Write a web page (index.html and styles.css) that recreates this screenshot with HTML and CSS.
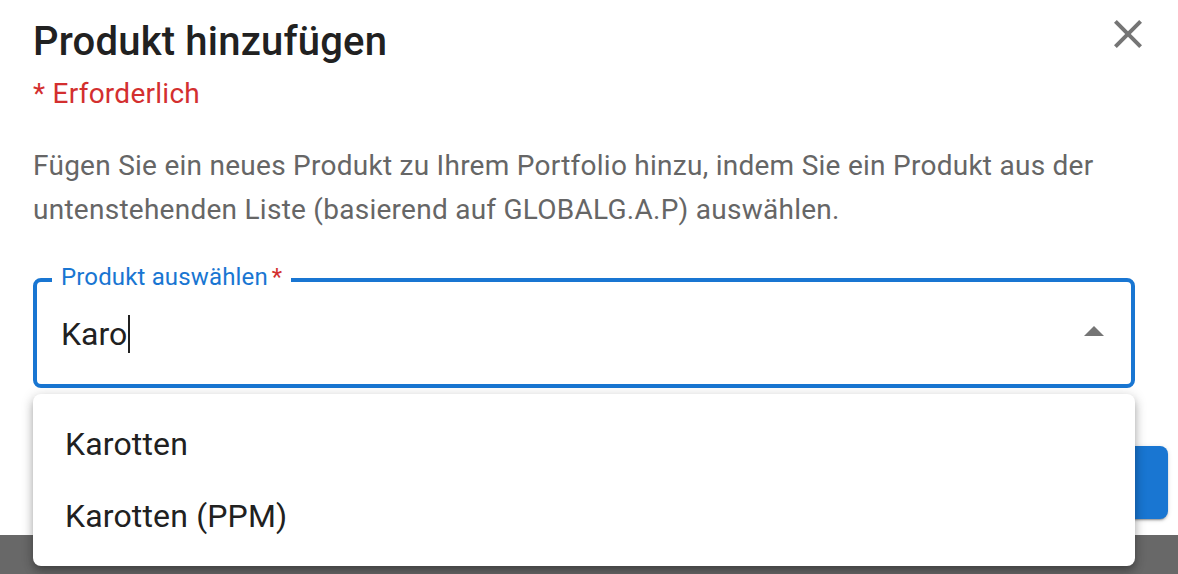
FILE: index.html
```html
<!DOCTYPE html>
<html lang="de">
<head>
<meta charset="utf-8">
<title>Produkt hinzufügen</title>
<link rel="stylesheet" href="styles.css">
</head>
<body>
<div class="dialog">
  <div class="head">
    <h2 class="title">Produkt hinzufügen</h2>
    <button class="close" aria-label="Schließen">
      <svg viewBox="0 0 24 24" width="48" height="48"><path d="M19 6.41 17.59 5 12 10.59 6.41 5 5 6.41 10.59 12 5 17.59 6.41 19 12 13.41 17.59 19 19 17.59 13.41 12z" fill="#757575"/></svg>
    </button>
  </div>
  <div class="req">* Erforderlich</div>
  <p class="desc">Fügen Sie ein neues Produkt zu Ihrem Portfolio hinzu, indem Sie ein Produkt aus der untenstehenden Liste (basierend auf GLOBALG.A.P) auswählen.</p>
  <div class="field">
    <div class="outline">
      <span class="value">Karo</span><span class="caret"></span>
      <svg class="arrow" viewBox="0 0 24 24" width="48" height="48"><path d="M7 14l5-5 5 5z" fill="#757575"/></svg>
    </div>
    <label class="label">Produkt auswählen<span class="star">*</span></label>
    <ul class="listbox">
      <li class="option">Karotten</li>
      <li class="option">Karotten (PPM)</li>
    </ul>
  </div>
  <div class="actions">
    <button class="primary"></button>
  </div>
</div>
</body>
</html>
```
FILE: styles.css
```css
html, body {
  margin: 0;
  padding: 0;
}
body {
  background: #686868;
  height: 574px;
  overflow: hidden;
  font-family: Roboto, "Liberation Sans", sans-serif;
}
.dialog {
  background: #fff;
  height: 535px;
  box-sizing: border-box;
  padding-left: 33px;
  display: flex;
  flex-direction: column;
}
.head {
  display: flex;
  justify-content: space-between;
  align-items: flex-start;
}
.title {
  margin: 18px 0 0;
  font-size: 40px;
  line-height: 48px;
  font-weight: 500;
  letter-spacing: 0.2px;
  color: #212121;
}
.close {
  margin: 10px 26px 0 0;
  padding: 0;
  border: 0;
  background: none;
  width: 48px;
  height: 48px;
  display: block;
}
.close svg { display: block; }
.req {
  margin-top: 10px;
  font-size: 28px;
  line-height: 36px;
  letter-spacing: 0.26px;
  color: #d32f2f;
}
.desc {
  margin: 32px 0 0;
  width: 1120px;
  font-size: 28px;
  line-height: 44px;
  letter-spacing: 0.26px;
  color: #666;
}
.field {
  position: relative;
  margin-top: 46px;
  width: 1102px;
  height: 110px;
}
.outline {
  box-sizing: border-box;
  height: 110px;
  border: 4px solid #1976d2;
  border-radius: 8px;
  display: flex;
  align-items: center;
  padding: 2px 13px 0 24px;
}
.value {
  font-size: 32px;
  line-height: 40px;
  color: #212121;
}
.caret {
  width: 2px;
  height: 38px;
  background: #212121;
  margin-left: 1px;
}
.arrow {
  margin-left: auto;
  margin-top: -4px;
  display: block;
}
.label {
  position: absolute;
  left: 19px;
  top: -13px;
  background: #fff;
  padding: 0 9px;
  font-size: 24px;
  line-height: 24px;
  letter-spacing: 0.15px;
  color: #1976d2;
}
.star {
  color: #d32f2f;
  margin-left: 4px;
}
.listbox {
  position: absolute;
  left: 0;
  right: 0;
  top: 116px;
  margin: 0;
  padding: 14px 0 14px;
  list-style: none;
  background: #fff;
  border-radius: 8px;
  box-shadow: 0 4px 6px -2px rgba(0,0,0,0.2), 0 6px 10px 1px rgba(0,0,0,0.14), 0 2px 12px 2px rgba(0,0,0,0.12);
  z-index: 2;
}
.option {
  height: 72px;
  line-height: 72px;
  padding-left: 32px;
  font-size: 32px;
  letter-spacing: 0.15px;
  color: #212121;
}
.actions {
  display: flex;
  justify-content: flex-end;
  margin-top: 58px;
  padding-right: 10px;
}
.primary {
  width: 220px;
  height: 73px;
  border: 0;
  border-radius: 8px;
  background: #1976d2;
  box-shadow: 0 3px 1px -2px rgba(0,0,0,0.2), 0 2px 2px 0 rgba(0,0,0,0.14), 0 1px 5px 0 rgba(0,0,0,0.12);
}
```
